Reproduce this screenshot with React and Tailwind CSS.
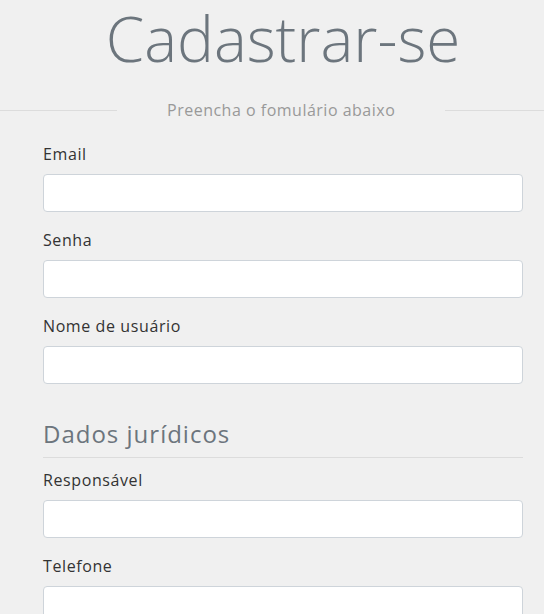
export default function App() {
  const fields = ['Email', 'Senha', 'Nome de usuário']
  const juridicos = ['Responsável', 'Telefone']

  return (
    <div className="min-h-screen w-full bg-[#f0f0f0] font-['Open_Sans',sans-serif]">
      <h1 className="pl-[22px] pt-[2px] text-center text-[62px] font-light leading-[72px] text-[#6c757d]">
        Cadastrar-se
      </h1>

      {/* divisor com subtítulo */}
      <div className="mt-[26px] flex items-center">
        <div className="h-px w-[117px] bg-[#dcdcdc]" />
        <span className="px-[50px] text-[16px] leading-[20px] tracking-[0.5px] text-[#999]">
          Preencha o fomulário abaixo
        </span>
        <div className="h-px flex-1 bg-[#dcdcdc]" />
      </div>

      <form className="pl-[43px] pr-[21px] pt-[22px]">
        {fields.map(f => (
          <div key={f} className="mb-4">
            <label className="mb-2 block text-[16px] leading-[24px] tracking-[0.6px] text-[#333]">{f}</label>
            <input className="block h-[38px] w-full rounded border border-[#ced4da] bg-white px-3" />
          </div>
        ))}

        <h4 className="mt-[35px] border-b border-[#dcdcdc] pb-[9px] text-[24px] leading-[29px] tracking-[1px] text-[#6c757d]">
          Dados jurídicos
        </h4>

        <div className="pt-[10px]">
          {juridicos.map(f => (
            <div key={f} className="mb-4">
              <label className="mb-2 block text-[16px] leading-[24px] tracking-[0.6px] text-[#333]">{f}</label>
              <input className="block h-[38px] w-full rounded border border-[#ced4da] bg-white px-3" />
            </div>
          ))}
        </div>
      </form>
    </div>
  )
}
